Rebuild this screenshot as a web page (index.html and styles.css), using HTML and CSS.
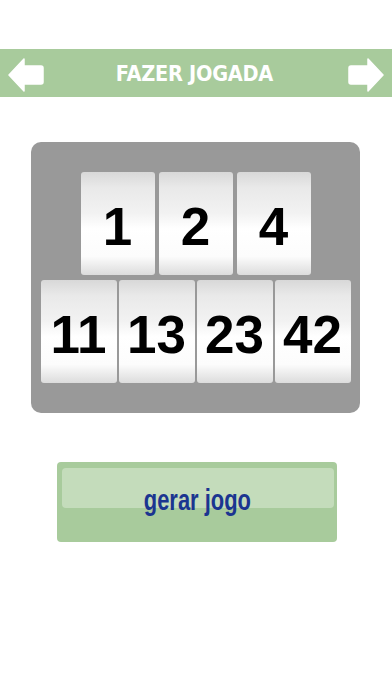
FILE: index.html
```html
<!DOCTYPE html>
<html lang="pt">
<head>
    <meta charset="UTF-8">
    <meta name="viewport" content="width=device-width, initial-scale=1.0">
    <title>Fazer Jogada</title>
    <link rel="stylesheet" href="styles.css">
</head>
<body>

    <!-- Barra do topo -->
    <div class="header">
        <svg class="arrow" viewBox="0 0 36 34" width="36" height="34">
            <path d="M1 17 L16 1 L16 8 L33 8 Q35 8 35 10 L35 24 Q35 26 33 26 L16 26 L16 33 Z" fill="#fff" stroke="#fff" stroke-width="1.5" stroke-linejoin="round"/>
        </svg>
        <h1>FAZER JOGADA</h1>
        <svg class="arrow" viewBox="0 0 36 34" width="36" height="34">
            <path d="M35 17 L20 1 L20 8 L3 8 Q1 8 1 10 L1 24 Q1 26 3 26 L20 26 L20 33 Z" fill="#fff" stroke="#fff" stroke-width="1.5" stroke-linejoin="round"/>
        </svg>
    </div>

    <div class="board">
        <div class="row row-top">
            <div class="tile">1</div>
            <div class="tile">2</div>
            <div class="tile">4</div>
        </div>
        <div class="row row-bottom">
            <div class="tile">11</div>
            <div class="tile">13</div>
            <div class="tile">23</div>
            <div class="tile">42</div>
        </div>
    </div>

    <button class="gen-btn"><span>gerar jogo</span></button>

</body>
</html>
```

FILE: styles.css
```css
body {
    font-family: "Liberation Sans", Arial, sans-serif;
    background-color: white;
    margin: 0;
    padding: 0;
}
.header {
    margin-top: 49px;
    height: 48px;
    background-color: #a8cb9c;
    display: flex;
    align-items: center;
    justify-content: space-between;
    padding: 0 8px;
}
.header h1 {
    margin: 0 0 0 -4px;
    font-family: "DejaVu Sans", sans-serif;
    font-weight: bold;
    font-size: 22px;
    letter-spacing: -0.3px;
    color: white;
    transform: scaleX(0.88);
}
.arrow {
    display: block;
    margin-top: 4px;
}
.board {
    width: 329px;
    margin: 45px 0 0 31px;
    background-color: #999999;
    border-radius: 10px;
    padding: 30px 0;
    display: flex;
    flex-direction: column;
    gap: 5px;
}
.row {
    display: flex;
    justify-content: center;
}
.row-top {
    gap: 4px;
}
.row-top .tile {
    width: 74px;
}
.row-bottom {
    gap: 2px;
}
.row-bottom .tile {
    width: 76px;
}
.tile {
    height: 103px;
    border-radius: 3px;
    background: linear-gradient(to bottom, #d8d8d8 0%, #e9e9e9 15%, #f2f2f2 40%, #ffffff 55%, #fcfcfc 82%, #dcdcdc 100%);
    display: flex;
    align-items: center;
    justify-content: center;
    font-weight: bold;
    font-size: 53px;
    color: #000;
    padding-top: 6px;
    box-sizing: border-box;
}
.gen-btn {
    display: flex;
    align-items: center;
    justify-content: center;
    position: relative;
    width: 280px;
    height: 80px;
    margin: 49px 0 0 57px;
    border: none;
    border-radius: 4px;
    background-color: #a8cb9c;
    padding: 0 0 4px;
}
.gen-btn::before {
    content: "";
    position: absolute;
    top: 6px;
    left: 5px;
    right: 3px;
    height: 40px;
    border-radius: 4px;
    background-color: #c4dcbb;
}
.gen-btn span {
    position: relative;
    display: inline-block;
    color: #1b3590;
    font-family: "Liberation Sans", Arial, sans-serif;
    font-weight: bold;
    font-size: 30px;
    transform: scaleX(0.73);
}
```
